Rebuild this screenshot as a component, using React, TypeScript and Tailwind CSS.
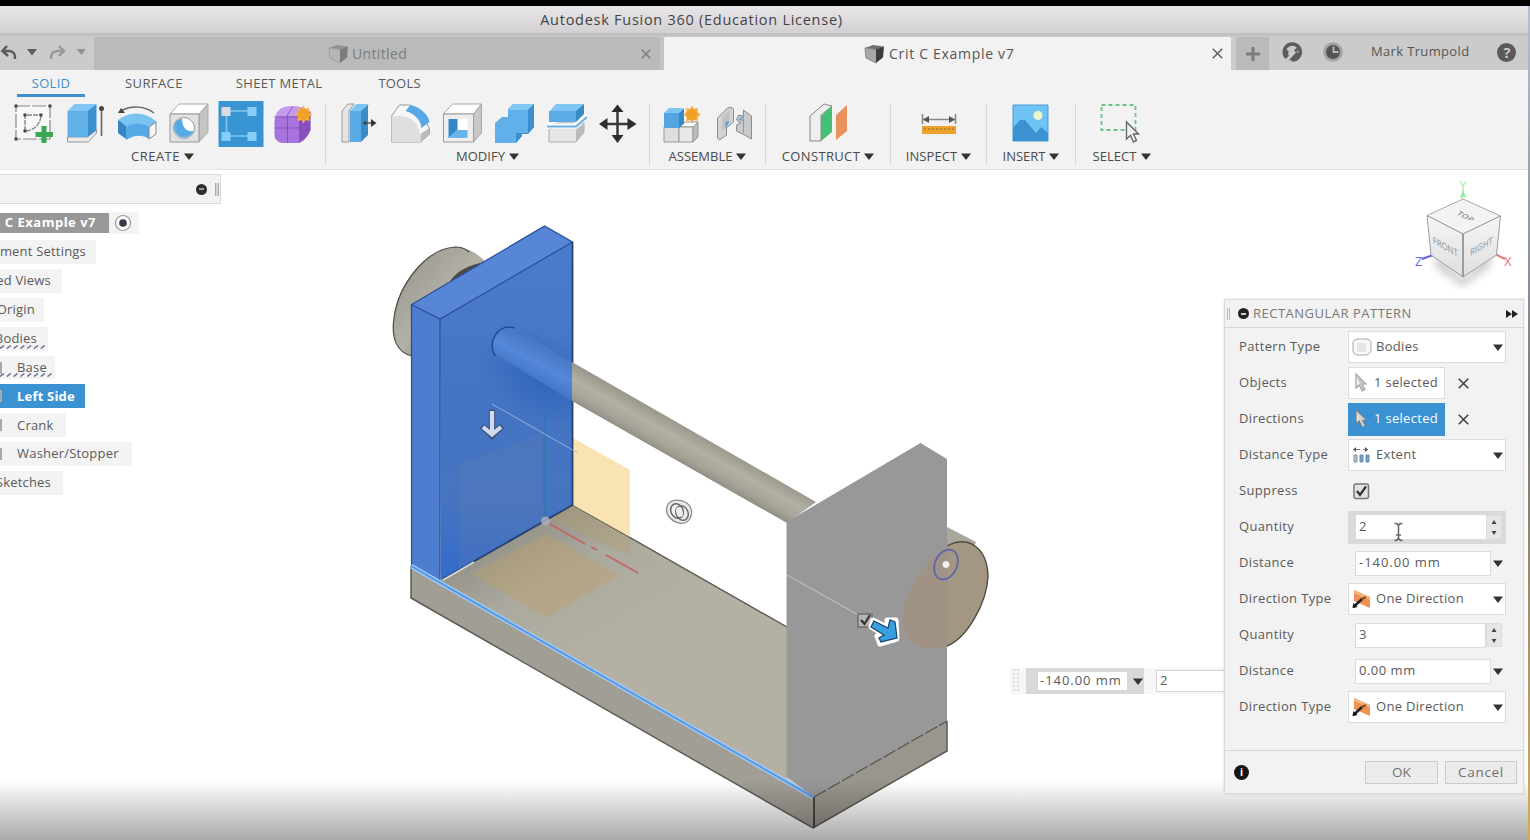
import type { ReactNode } from "react";

const Caret = ({ className = "" }: { className?: string }) => (
  <svg width="10" height="7" viewBox="0 0 10 7" className={className}>
    <path d="M0 0.5H10L5 7Z" fill="currentColor" />
  </svg>
);

const Cross = ({ size = 10, className = "" }: { size?: number; className?: string }) => (
  <svg width={size} height={size} viewBox="0 0 10 10" className={className}>
    <path d="M0.7 0.7L9.3 9.3M9.3 0.7L0.7 9.3" stroke="currentColor" strokeWidth="1.5" fill="none" />
  </svg>
);

const Cube = ({ faded = false }: { faded?: boolean }) => (
  <svg width="21" height="20" viewBox="0 0 21 20" opacity={faded ? 0.5 : 1}>
    <path d="M1 4L9 1L20 2.500L13 5.500Z" fill="#6f6f6f" />
    <path d="M1 4L13 5.500L12 19L2 14Z" fill={faded ? "#b4b4b4" : "#a9a9a9"} stroke="#777" strokeWidth="0.8" />
    <path d="M12 5.500L20 2.500L19 13.500L12 19Z" fill="#3d3d3d" />
  </svg>
);

const Tool = ({ x, children }: { x: number; children: ReactNode }) => (
  <svg width="46" height="46" viewBox={`${x - 23} 100 46 46`} className="shrink-0">
    {children}
  </svg>
);

const Star = ({ x, y }: { x: number; y: number }) => (
  <g transform={`translate(${x} ${y})`}>
    <path
      d="M0 -9L1.800 -5.800L6 -6.500L5.500 -2.200L9 0L5.500 2.200L6 6.500L2 5.500L0 9L-2 5.500L-6 6.500L-5.500 2.200L-9 0L-5.500 -2.200L-6 -6.500L-2 -5.500Z"
      fill="#f3b04c"
    />
    <circle r="5.800" fill="#f1a127" />
  </g>
);

const Group = ({ label, className, tracking, children }: { label: string; className: string; tracking: string; children: ReactNode }) => (
  <section className={`flex flex-col items-center ${className}`}>
    <div className="flex h-[46px] items-center justify-center gap-[6px]">{children}</div>
    <div className="mt-px flex h-[18px] items-center gap-[4px] whitespace-nowrap text-[13px] text-[#4a4a4a]">
      <span className={tracking}>{label}</span>
      <Caret className="-mt-px text-[#333]" />
    </div>
  </section>
);

const Divider = () => <div className="mt-[2px] h-[62px] w-px shrink-0 bg-[#d6d6d6]" />;

const TitleBar = () => (
  <header className="flex h-[27px] items-center justify-center bg-gradient-to-b from-[#e9e6e9] to-[#d2d0d2] pr-[147px] text-[14.5px] text-[#444]">
    <h1 className="whitespace-nowrap tracking-[0.73px]">Autodesk Fusion 360 (Education License)</h1>
  </header>
);

const DocumentTabs = () => (
  <nav className="flex h-[37px] items-end border-t-[3px] border-[#c2c0c2] bg-[#cbcbcb]">
    <div className="flex h-[34px] w-[94px] shrink-0 items-center text-[#626262]">
      <svg width="94" height="34" viewBox="0 36 94 34">
        <path d="M7 46L2.500 51L8 56M3 51H9C13.500 51 15.500 54 15 59" fill="none" stroke="#5c5c5c" strokeWidth="2.500" />
        <path d="M27 49H37L32 55.500Z" fill="#5a5a5a" />
        <path d="M59 46L64 51L59 56M63 51H57.500C53 51 50.500 54 51 59" fill="none" stroke="#999" strokeWidth="2.400" />
        <path d="M76.500 49H86L81.500 55Z" fill="#929292" />
      </svg>
    </div>
    <div className="flex h-[33px] w-[566px] shrink-0 items-center bg-[#bababa] pl-[234px] pr-[9px] text-[#7b7b7b]">
      <Cube faded />
      <span className="ml-[3px] text-[14px] tracking-[0.35px]">Untitled</span>
      <Cross className="ml-auto" />
    </div>
    <div className="h-[33px] w-[4px] shrink-0 bg-[#c3c3c3]" />
    <div className="flex h-[33px] w-[567px] shrink-0 items-center rounded-t-[2px] bg-[#f2f2f2] pl-[200px] pr-[8px] text-[#555]">
      <Cube />
      <span className="ml-[4px] whitespace-nowrap text-[14px] tracking-[0.7px]">Crit C Example v7</span>
      <Cross className="ml-auto text-[#666]" size={11} />
    </div>
    <div className="ml-[5px] flex h-[33px] w-[33px] shrink-0 items-center justify-center bg-[#bababa]">
      <svg width="16" height="16" viewBox="0 0 16 16">
        <path d="M8 1V15M1 8H15" stroke="#7c7c7c" strokeWidth="3" />
      </svg>
    </div>
    <div className="flex h-[36px] flex-1 items-center">
      <svg width="90" height="22" viewBox="1269 41 90 22">
        <path d="M1286.500 57.500A8 8 0 1 1 1292 60" fill="none" stroke="#5d5d5d" strokeWidth="3.600" />
        <path d="M1288 58Q1285 54 1287 50" fill="none" stroke="#5d5d5d" strokeWidth="4" />
        <path d="M1288 60Q1297 62 1301 54L1297 52L1290 56Z" fill="#5d5d5d" />
        <path d="M1286 61L1296 50.500" stroke="#cbcbcb" strokeWidth="3" />
        <path d="M1295 51.500L1299 47.500" stroke="#5d5d5d" strokeWidth="2.800" />
        <circle cx="1333" cy="52" r="9.800" fill="#a3a3a3" />
        <circle cx="1333" cy="52" r="7" fill="#555" />
        <path d="M1333.500 46.500V52H1338.500" stroke="#bbb" strokeWidth="1.800" fill="none" />
      </svg>
      <span className="ml-[12px] whitespace-nowrap text-[13px] tracking-[0.35px] text-[#555]">Mark Trumpold</span>
      <span className="ml-[28px] flex h-[19px] w-[19px] items-center justify-center rounded-full bg-[#5a5a5a] text-[15px] font-bold leading-none text-[#cbcbcb]">?</span>
    </div>
  </nav>
);

const Ribbon = () => (
  <section className="h-[100px] border-b border-[#e4e4e4] bg-[#f2f2f2]">
    <div className="flex h-[31px] pl-[17px] pt-[3px] text-[13px] text-[#5a5a5a]">
      <span className="flex h-[24px] w-[68px] items-start justify-center border-b-[3px] border-[#3c91cb] pt-[1px] tracking-[0.3px] text-[#3c91cb]">SOLID</span>
      <span className="ml-[40px] whitespace-nowrap pt-[1px] tracking-[0.4px]">SURFACE</span>
      <span className="ml-[53px] whitespace-nowrap pt-[1px] tracking-[0.35px]">SHEET METAL</span>
      <span className="ml-[56px] whitespace-nowrap pt-[1px] tracking-[0.2px]">TOOLS</span>
    </div>
    <div className="flex">
      <Group label="CREATE" className="w-[325px]" tracking="tracking-[0.5px]">
        <Tool x={34}>
          <path d="M17 105H51V138H17Z" fill="#f8f8f8" stroke="#888" strokeWidth="1.200" strokeDasharray="14 2" />
          <path d="M26 130V114H42M42 115C41 124 35 129 27 130" fill="none" stroke="#888" strokeWidth="1.400" strokeDasharray="5 1" />
          <path d="M15.500 103.500h3v3h-3zM49.500 103.500h3v3h-3zM15.500 136.500h3v3h-3zM24.500 112.500h3v3h-3zM40.500 112.500h3v3h-3zM24.500 128.500h3v3h-3z" fill="#444" />
          <path d="M45 125V142M36.500 133.500H54" stroke="#3aa852" strokeWidth="5" />
        </Tool>
        <Tool x={85.500}>
          <path d="M68 136H88L97 129V132L89 141H68Z" fill="#ececec" stroke="#999" strokeWidth="1" />
          <path d="M68 110L75 103H97L88 110Z" fill="#82c6f3" />
          <path d="M68 110H88V136H68Z" fill="#62b0ea" />
          <path d="M88 110L97 103V129L88 136Z" fill="#3b90cd" />
          <path d="M102 109V135" stroke="#666" strokeWidth="1.600" />
          <circle cx="102" cy="107.500" r="2.500" fill="#444" />
        </Tool>
        <Tool x={138}>
          <path d="M119 119C130 110 146 110 158 121L151 127C144 122 136 123 127 128Z" fill="#7bc4f1" />
          <path d="M119 119L127 125V138L119 132Z" fill="#3885c4" />
          <path d="M127 126C136 121 144 122 150 126V138C143 133 135 134 127 139Z" fill="#55a9e4" />
          <path d="M150 126L157 121V133L150 138Z" fill="#f5f5f5" stroke="#888" />
          <path d="M122 110C132 104 146 105 155 112" fill="none" stroke="#666" strokeWidth="1.500" />
          <path d="M119 112L122 107L126 112Z" fill="#444" />
        </Tool>
        <Tool x={190}>
          <path d="M171 113L180 103H209L200 113Z" fill="#fff" stroke="#aaa" />
          <path d="M200 113L209 103V131L200 141Z" fill="#c4c4c4" stroke="#aaa" />
          <path d="M171 113H200V141H171Z" fill="#e1e1e1" stroke="#999" />
          <circle cx="185" cy="127" r="10.500" fill="#fff" stroke="#999" />
          <path d="M178 119.500A10 10 0 1 0 194.500 130C188 131 183 127 183 117.500Z" fill="#58abe2" />
        </Tool>
        <Tool x={241.500}>
          <rect x="219" y="100" width="45" height="46" fill="#3994d4" />
          <path d="M227 110H252M227 110V135H252" fill="none" stroke="#81c7f4" strokeWidth="1.700" />
          <path d="M222 106h9v9h-9z" fill="#d9dde0" />
          <path d="M248 106h9v9h-9zM222 131h9v9h-9zM248 131h9v9h-9z" fill="#86cdf8" />
        </Tool>
        <Tool x={292.500}>
          <path d="M274 120Q275 109 284 106Q300 103 309 111L310 129Q306 139 299 142H281Q274 140 274 134Z" fill="#a873df" />
          <path d="M275 116Q277 108 285 106H300L298 115Z" fill="#c49af0" />
          <path d="M299 116L310 110V129Q306 138 299 141Z" fill="#8750bd" />
          <path d="M274 127H299L310 121M287 114V142M274 116H299V141M287 114L292 106" fill="none" stroke="#8350b5" strokeWidth="0.900" />
          <Star x={303} y={113.500} />
        </Tool>
      </Group>
      <Divider />
      <Group label="MODIFY" className="w-[323px]" tracking="tracking-[0.05px]">
        <Tool x={357}>
          <path d="M341 110L347 103H353L348 110V141H341Z" fill="#e5e5e5" stroke="#999" />
          <path d="M349 110L355 103H368L362 110Z" fill="#7cc5f3" />
          <path d="M349 110H360V141H349Z" fill="#5aabe5" />
          <path d="M360 110L367 104V134L360 141Z" fill="#3a8cc9" />
          <path d="M364 122H372" stroke="#555" strokeWidth="1.500" />
          <circle cx="364" cy="122" r="1.800" fill="#444" />
          <path d="M370 118L375.500 122L370 126Z" fill="#333" />
        </Tool>
        <Tool x={409.500}>
          <path d="M391 115L399 104H409L420 110L429 128V133L420 141H391Z" fill="#f6f6f6" stroke="#999" />
          <path d="M391 115H398C412 115 420 123 420 141H391Z" fill="#dedede" />
          <path d="M405 110L410 104C420 106 428 114 429 121L421 127C420 118 413 112 405 110Z" fill="#54a8e5" />
          <path d="M420 133L429 127V132L420 141Z" fill="#bbb" />
        </Tool>
        <Tool x={461.500}>
          <path d="M443 113L452 103H481L473 113Z" fill="#fff" stroke="#aaa" />
          <path d="M473 113L481 103V132L473 141Z" fill="#c8c8c8" stroke="#aaa" />
          <path d="M443 113H473V141H443Z" fill="#eee" stroke="#999" />
          <path d="M448 118H467V137H448Z" fill="#fff" />
          <path d="M448 118L457 118V129L448 137Z" fill="#3588c6" />
          <path d="M448 137L457 129H467V137Z" fill="#68b5ec" />
        </Tool>
        <Tool x={513}>
          <path d="M494 122L501 116H507V108L512 103H533V126L527 133H521V135L515 142H494Z" fill="#61b0ea" />
          <path d="M507 109L512 103H533L527 109Z" fill="#83c8f4" />
          <path d="M527 109L533 103V126L527 133H521V135L515 142V132H527Z" fill="#3b8fcd" />
        </Tool>
        <Tool x={565}>
          <path d="M548 129L556 122H583V131L575 141H548Z" fill="#e5e5e5" stroke="#aaa" />
          <path d="M575 129L583 122V132L575 141Z" fill="#bbb" />
          <path d="M546 125H574L586 115" fill="none" stroke="#fff" strokeWidth="5" />
          <path d="M546 125.500H575L586 116" fill="none" stroke="#68aee9" strokeWidth="2" />
          <path d="M548 111L555 103H583L575 111Z" fill="#80c6f2" />
          <path d="M548 110H575V121H548Z" fill="#5babe4" />
          <path d="M575 110L583 103V113L575 121Z" fill="#398bc6" />
        </Tool>
        <Tool x={617.500}>
          <path d="M617 108V138M602 123H632" stroke="#3a3a3a" strokeWidth="2.500" />
          <path d="M617 103.500L623 111H611ZM617 142L623 134H611ZM598.500 123L607 117V129ZM636 123L627 117V129Z" fill="#2d2d2d" />
        </Tool>
      </Group>
      <Divider />
      <Group label="ASSEMBLE" className="w-[115px]" tracking="tracking-[0px]">
        <Tool x={681}>
          <path d="M663 126H678V141H663Z" fill="#dedede" stroke="#999" />
          <path d="M679 126L684 121H697L692 126Z" fill="#fafafa" stroke="#999" />
          <path d="M678 126H692V141H678Z" fill="#e8e8e8" stroke="#999" />
          <path d="M692 126L697 121V136L692 141Z" fill="#bcbcbc" stroke="#999" />
          <path d="M663 112L668 107H682L678 112Z" fill="#7fc5f1" />
          <path d="M663 112H678V127H663Z" fill="#54a6e0" />
          <path d="M678 112L683 107V122L678 127Z" fill="#3789c6" />
          <Star x={691} y={113.500} />
        </Tool>
        <Tool x={733.500}>
          <path d="M717 117L727 107Q731 105 733 108V121L726 127V134L719 139L717 137Z" fill="#d2d3d5" stroke="#8a8a8a" />
          <path d="M722 116L729 109V122L722 130Z" fill="#bfc1c4" />
          <path d="M725 121L729 120L725 128Z" fill="#5f9fd4" />
          <path d="M743 109L751 115V138L744 134L736 130V124L740 122L736 119L738 114L743 115Z" fill="#c9cacb" stroke="#8a8a8a" />
          <path d="M743 114V132" stroke="#999" />
          <path d="M737 119L742 115V120Z" fill="#6fa9d9" />
        </Tool>
      </Group>
      <Divider />
      <Group label="CONSTRUCT" className="w-[124px]" tracking="tracking-[0.35px]">
        <Tool x={828}>
          <path d="M810 115L824 103L832 105L821 114V140H810Z" fill="#eee" stroke="#888" />
          <path d="M821 115L832 105V131L821 140Z" fill="#45bf76" />
          <path d="M836 114L847 104V130L836 139Z" fill="#e6935e" />
        </Tool>
      </Group>
      <Divider />
      <Group label="INSPECT" className="w-[95px]" tracking="tracking-[0.05px]">
        <Tool x={938}>
          <path d="M921.500 113V123M954.500 113V123M922 118.500H954" stroke="#888" strokeWidth="1.600" />
          <path d="M922 118.500L928 115V122ZM954 118.500L948 115V122Z" fill="#555" />
          <path d="M921 125H955V133H921Z" fill="#ecA22c" />
          <path d="M924 127V129M928 127V129M932 127V129M936 127V129M940 127V129M944 127V129M948 127V129M952 127V129" stroke="#9a6a22" />
        </Tool>
      </Group>
      <Divider />
      <Group label="INSERT" className="w-[88px]" tracking="tracking-[0px]">
        <Tool x={1031}>
          <path d="M1013 104H1048V140H1013Z" fill="#6fc4f5" stroke="#4b9bce" />
          <circle cx="1038" cy="114.500" r="4.500" fill="#edf6cf" />
          <path d="M1013 127L1020 119H1025L1036 132L1041 126L1048 132V140H1013Z" fill="#3a92d2" />
        </Tool>
      </Group>
      <Divider />
      <Group label="SELECT" className="w-[91px]" tracking="tracking-[0.05px]">
        <Tool x={1121.500}>
          <path d="M1101 104H1135V129H1101Z" fill="none" stroke="#6cc585" strokeWidth="1.800" strokeDasharray="4 3" />
          <path d="M1126 121V138L1130 134.500L1133 141L1136 139.500L1133 133H1138Z" fill="#f4f4f4" stroke="#666" strokeWidth="1.400" />
        </Tool>
      </Group>
    </div>
  </section>
);

const Scene = () => (
  <svg className="absolute inset-0" width="1530" height="670" viewBox="0 170 1530 670">
    <defs>
      <linearGradient id="wheel" x1="0" y1="0" x2="1" y2="1">
        <stop offset="0" stopColor="#93918a" />
        <stop offset="0.500" stopColor="#b3b0a5" />
        <stop offset="1" stopColor="#75736b" />
      </linearGradient>
      <linearGradient id="rod" gradientUnits="userSpaceOnUse" x1="700" y1="436" x2="682" y2="468">
        <stop offset="0" stopColor="#9b988c" />
        <stop offset="0.350" stopColor="#b3b0a5" />
        <stop offset="0.700" stopColor="#a5a297" />
        <stop offset="1" stopColor="#87847a" />
      </linearGradient>
      <linearGradient id="rodBlue" gradientUnits="userSpaceOnUse" x1="545" y1="345" x2="526" y2="380">
        <stop offset="0" stopColor="#4676c4" />
        <stop offset="0.500" stopColor="#5588d8" />
        <stop offset="1" stopColor="#3f71c1" />
      </linearGradient>
      <linearGradient id="floor" gradientUnits="userSpaceOnUse" x1="530" y1="510" x2="610" y2="650">
        <stop offset="0" stopColor="#918f86" />
        <stop offset="0.450" stopColor="#aca99f" />
        <stop offset="1" stopColor="#b4b0a4" />
      </linearGradient>
      <linearGradient id="plate" x1="0" y1="0" x2="0" y2="1">
        <stop offset="0" stopColor="#4a7ccb" />
        <stop offset="0.500" stopColor="#4374c3" />
        <stop offset="0.750" stopColor="#4675c0" />
        <stop offset="1" stopColor="#346bca" />
      </linearGradient>
      <radialGradient id="shade">
        <stop offset="0" stopColor="#2459b0" stopOpacity="0.600" />
        <stop offset="1" stopColor="#2459b0" stopOpacity="0" />
      </radialGradient>
      <linearGradient id="cubeShade" x1="0" y1="0" x2="0" y2="1">
        <stop offset="0" stopColor="#f6f6f6" />
        <stop offset="1" stopColor="#dedede" />
      </linearGradient>
      <clipPath id="plateFace"><path d="M440 319L572.500 242V505L441 580Z" /></clipPath>
      <filter id="soft"><feGaussianBlur stdDeviation="4" /></filter>
    </defs>

    <path d="M412 356C397 353 391 338 394 318C398 286 425 249 455 247C466 247 476 252 487 263L412 310Z" fill="url(#wheel)" />
    <path d="M412 356C397 353 391 338 394 318C398 286 425 249 455 247C461 247 466 249 469 252" fill="none" stroke="#4c4a45" strokeWidth="1.200" />
    <path d="M450 281C457 271 470 264 486 262L478 268Z" fill="#4c4b46" />

    <path d="M411 566L441 580L573 505L787 627V778L814 797Z" fill="url(#floor)" />
    <path d="M573 505L787 627" stroke="#555147" strokeWidth="1.300" />
    <path d="M573 438L630 470V537L573 505Z" fill="#fae3b3" />
    <path d="M573 506L630 538V556L548 518Z" fill="#b49e6d" opacity="0.350" />
    <path d="M545 534L619 575L546 618L472 574Z" fill="#bda368" opacity="0.420" />
    <path d="M411 566L814 797V828L411 598Z" fill="#a19e95" />
    <path d="M814 797L947 721V751L814 828Z" fill="#9a968e" />
    <path d="M411 566V598L813 828L947 751V721" fill="none" stroke="#5b5952" strokeWidth="1.500" />
    <path d="M814 797V828" stroke="#494742" strokeWidth="2" />

    <path d="M411.500 304.500L440 319V580L411.500 565Z" fill="#4c7dce" />
    <path d="M411.500 304.500L544.500 226L572.500 242L440 319Z" fill="#5686d5" />
    <path d="M440 319L572.500 242V505L441 580Z" fill="url(#plate)" />
    <g clipPath="url(#plateFace)">
      <ellipse cx="543" cy="378" rx="72" ry="42" transform="rotate(28 543 378)" fill="url(#shade)" />
    </g>
    <path d="M459 465L545 432V522L459 570Z" fill="#647eab" opacity="0.220" />
    <path d="M411.500 566V304.500L544.500 226L572.500 242L440 319L411.500 304.500" fill="none" stroke="#274d95" strokeWidth="1.200" />
    <path d="M440 319V580" stroke="#2d57a8" strokeWidth="1.500" />
    <path d="M572.500 242V505L443 579" fill="none" stroke="#27406f" strokeWidth="1.800" />
    <path d="M510 326L572 362V401L496 355C488 341 500 325 510 326Z" fill="url(#rodBlue)" />
    <path d="M495 356C486 342 499 322 515 328" fill="none" stroke="#234b94" strokeWidth="1.500" />
    <path d="M572 362L816 502L787 523L572 401Z" fill="url(#rod)" />
    <path d="M544.500 412V516" stroke="#267ba8" strokeWidth="2.500" opacity="0.550" />
    <path d="M492 404L578 453" stroke="#a9bee2" strokeWidth="1" opacity="0.800" />
    <path d="M492 409.500V434M482 426L492 435.500L502 426" fill="none" stroke="#3d5680" strokeWidth="6.500" />
    <path d="M492 411V433M483 427L492 434.500L501 427" fill="none" stroke="#d0daec" strokeWidth="4.200" />
    <circle cx="545.500" cy="521" r="4.500" fill="#a9aeb3" opacity="0.850" />
    <path d="M550 524L585 544M591 547L597 550M606 555L638 573" stroke="#c1655f" strokeWidth="1.600" />
    <path d="M443 580L474 562" stroke="#dedad5" strokeWidth="1.500" />
    <path d="M411 566L813 797" stroke="#a9cff7" strokeWidth="4.500" />
    <path d="M411 566L813 797" stroke="#569ce8" strokeWidth="2.200" />

    <path d="M947 527L976 542L965 570L947 560Z" fill="#aaa79c" />
    <path d="M947 546C968 535 987 547 988 576C987 603 967 638 947 646Z" fill="#a39783" />
    <path d="M947 546C968 535 987 547 988 576C987 603 967 638 947 646" fill="none" stroke="#4f4b42" strokeWidth="1.400" />
    <path d="M786.500 522L920.500 443L947 459V721L814 797L786.500 777Z" fill="#989898" />
    <path d="M814 797L947 721" stroke="#5d5b55" strokeWidth="1.400" strokeDasharray="14 2" />
    <path d="M947 547C925 562 901 593 903 622C904 644 918 653 947 647Z" fill="#a09285" />
    <ellipse cx="946" cy="564.500" rx="11" ry="15.500" transform="rotate(24 946 564.500)" fill="none" stroke="#5963b1" strokeWidth="1.700" />
    <circle cx="946" cy="564.500" r="4" fill="#f3f1e9" stroke="#888" strokeWidth="0.800" />
    <path d="M787 575L862 617" stroke="#bdbdbd" strokeWidth="1.300" />
    <rect x="858" y="614" width="14" height="13" fill="#b5b5b5" stroke="#666" strokeWidth="1.300" />
    <path d="M861 620L864.500 624L870 615" fill="none" stroke="#333" strokeWidth="2.200" />
    <path d="M873 620L887 627V620L896 620L897 639L880 644L877 636L882 634L871 627Z" fill="#fff" stroke="#fff" strokeWidth="5" strokeLinejoin="round" />
    <path d="M874 621L888 628L890 620L895 622L897 638L881 642L879 638L884 635L871 627Z" fill="#39a0df" stroke="#1d4d73" strokeWidth="1.300" />

    <path d="M667 507C668 499 679 499 685 502C693 506 693 515 689 520C684 526 675 523 670 518C667 515 666 511 667 507Z" fill="#e8e8e8" stroke="#888" strokeWidth="1.200" />
    <ellipse cx="677" cy="511" rx="6" ry="7.500" transform="rotate(-25 677 511)" fill="#f2f2f2" stroke="#666" strokeWidth="1.500" />
    <ellipse cx="682" cy="513" rx="6" ry="7.500" transform="rotate(-25 682 513)" fill="none" stroke="#666" strokeWidth="1.400" />
    <ellipse cx="679.500" cy="512" rx="3" ry="5" transform="rotate(-25 679.500 512)" fill="#eee" />

    <path d="M1436 255L1463 280L1490 255V265L1463 286L1436 266Z" fill="#555" opacity="0.400" filter="url(#soft)" />
    <path d="M1463 189V198M1460.500 198L1463 192L1465.500 198" stroke="#8aeb9a" strokeWidth="1.300" fill="none" />
    <text x="1459.500" y="190" fontSize="12" fill="#91ec9f" fontFamily="Open Sans">Y</text>
    <path d="M1422 259L1433 255" stroke="#615fe2" strokeWidth="2" />
    <text x="1415" y="266" fontSize="13" fill="#6664df" fontFamily="Open Sans">Z</text>
    <path d="M1495 254L1505 259" stroke="#e57b80" strokeWidth="2" />
    <text x="1504" y="266" fontSize="13" fill="#e5757b" fontFamily="Open Sans">X</text>
    <path d="M1463 199L1500.500 216L1463 234L1427 215.500Z" fill="#f3f3f3" stroke="#a9a9a9" />
    <path d="M1427 215.500L1463 234V277L1431 255Z" fill="url(#cubeShade)" stroke="#9c9c9c" />
    <path d="M1500.500 216L1463 234V277L1496.500 255Z" fill="url(#cubeShade)" stroke="#9c9c9c" />
    <path d="M1463 234V277" stroke="#999" strokeWidth="1.800" />
    <text transform="matrix(0.860 0.460 -0.600 0.500 1456 214)" fontSize="9" fill="#8d8d8d" fontFamily="Open Sans" fontWeight="600">TOP</text>
    <text transform="matrix(0.820 0.460 0.080 1 1433 243)" fontSize="9.500" fill="#8f8f8f" fontFamily="Open Sans">FRONT</text>
    <text transform="matrix(0.820 -0.460 -0.060 1 1470 256)" fontSize="9.500" fill="#8f8f8f" fontFamily="Open Sans">RIGHT</text>
  </svg>
);

const nodes = [
  { label: "ment Settings", box: "w-[96px] pr-[10px] justify-end bg-[#f3f3f3]" },
  { label: "ed Views", box: "w-[62px] pr-[11px] justify-end bg-[#f3f3f3]" },
  { label: "Origin", box: "w-[44px] pr-[9px] justify-end bg-[#f3f3f3]" },
  { label: "Bodies", box: "w-[48px] pr-[11px] justify-end bg-[#f3f3f3]", hatch: 48 },
  { label: "Base", box: "w-[55px] pl-[17px] bg-[#f3f3f3]", hatch: 55, tick: true },
  { label: "Left Side", box: "w-[85px] pl-[17px] bg-[#3b92d3] font-bold text-white", tick: true },
  { label: "Crank", box: "w-[66px] pl-[17px] bg-[#f3f3f3]", tick: true },
  { label: "Washer/Stopper", box: "w-[132px] pl-[17px] bg-[#f3f3f3]", tick: true },
  { label: "Sketches", box: "w-[63px] pr-[12px] justify-end bg-[#f3f3f3]" },
];

const Browser = () => (
  <aside className="relative w-[240px] pt-[4px] text-[13px] text-[#5a5a5a]">
    <div className="flex h-[30px] w-[221px] items-center justify-end border border-l-0 border-[#dadada] bg-[#f2f2f2]">
      <span className="flex h-[11px] w-[11px] items-center justify-center rounded-full bg-[#2d2d2d]">
        <span className="h-[2px] w-[5px] bg-[#999]" />
      </span>
      <span className="ml-[8px] mr-px h-[13px] w-[4px] border-x border-[#aaa] bg-[#d5d5d5]" />
    </div>
    <div className="mt-[8px] flex h-[22px] items-center">
      <span className="flex h-[20px] w-[109px] items-center justify-end overflow-hidden whitespace-nowrap bg-[#989898] pr-[13px] font-bold tracking-[0.5px] text-white">C Example v7</span>
      <span className="flex h-[22px] w-[30px] items-center justify-center bg-[#f3f3f3]">
        <svg width="18" height="18" viewBox="0 0 18 18">
          <circle cx="8" cy="9" r="7.500" fill="#fafafa" stroke="#9a9a9a" strokeWidth="1.200" />
          <circle cx="8" cy="9" r="3.800" fill="#363945" />
        </svg>
      </span>
    </div>
    <ul className="mt-[6px] flex flex-col gap-[5px]">
      {nodes.map((n) => (
        <li key={n.label} className={`relative flex h-[23.9px] items-center overflow-hidden whitespace-nowrap tracking-[0.2px] ${n.box}`}>
          {n.tick && <span className="absolute left-0 top-[6px] h-[12px] w-[2px] bg-[#aaa]" />}
          <span className="shrink-0">{n.label}</span>
          {n.hatch && (
            <svg className="absolute bottom-[2px] left-0" width={n.hatch} height="4" viewBox={`0 0 ${n.hatch} 4`}>
              {Array.from({ length: Math.floor(n.hatch / 6.8) }, (_, i) => (
                <path key={i} d={`M${i * 6.8} 3.500L${i * 6.8 + 4} 0.500`} stroke="#686e8c" strokeWidth="1.500" />
              ))}
            </svg>
          )}
        </li>
      ))}
    </ul>
  </aside>
);

const Pointer = ({ active = false }: { active?: boolean }) => (
  <svg width="14" height="20" viewBox="0 0 14 20">
    <path d="M2 1V15L5.200 12L8.200 18L11 16.500L8 11H12Z" fill={active ? "#e2e2e2" : "#f1f1f1"} stroke={active ? "#777" : "#999"} strokeWidth="1.100" />
    <path d="M2 1L12 11L8 11L11 16.500L8.500 18Z" fill={active ? "#ccc" : "#b5b5b5"} opacity="0.700" />
  </svg>
);

const Row = ({ label, children }: { label: string; children: ReactNode }) => (
  <div className="flex h-[36px] items-center">
    <label className="w-[109px] shrink-0 whitespace-nowrap tracking-[0.35px]">{label}</label>
    {children}
  </div>
);

const Choice = ({ icon, value }: { icon: ReactNode; value: string }) => (
  <div className="flex h-[32px] w-[158px] items-center border border-[#dcdcdc] bg-white pl-[3px] pr-[2px]">
    <span className="flex w-[20px] justify-center">{icon}</span>
    <span className="ml-[4px] whitespace-nowrap tracking-[0.3px]">{value}</span>
    <Caret className="ml-auto text-[#333]" />
  </div>
);

const Picked = ({ active = false }: { active?: boolean }) => (
  <>
    <div className={active ? "flex h-[33px] w-[97px] items-center bg-[#3a92d3] pl-[6px] text-white" : "flex h-[32px] w-[97px] items-center border border-[#dedede] bg-white pl-[5px]"}>
      <Pointer active={active} />
      <span className="ml-[6px] whitespace-nowrap tracking-[0.3px]">1 selected</span>
    </div>
    <Cross className="ml-[13px] text-[#444]" size={11} />
  </>
);

const Spinner = () => (
  <span className="flex h-[24px] w-[16px] flex-col items-center justify-around border border-[#ddd] bg-[#e6e6e6]">
    <svg width="6" height="4" viewBox="0 0 6 4"><path d="M0.500 4L3 0L5.500 4Z" fill="#444" /></svg>
    <svg width="6" height="4" viewBox="0 0 6 4"><path d="M0.500 0L3 4L5.500 0Z" fill="#444" /></svg>
  </span>
);

const Length = ({ value, tracking }: { value: string; tracking: string }) => (
  <>
    <div className={`ml-[7px] flex h-[25px] w-[136px] items-center whitespace-nowrap border border-[#dcdcdc] bg-white pl-[3px] ${tracking}`}>{value}</div>
    <Caret className="ml-[2px] text-[#333]" />
  </>
);

const DirectionIcon = () => (
  <svg width="20" height="20" viewBox="0 0 20 20">
    <path d="M2 1L18 8V19L2 12Z" fill="#ee9253" />
    <path d="M2 1L18 8V11L2 4Z" fill="#f7b27e" />
    <path d="M1.500 18L10 10" stroke="#222" strokeWidth="2.600" />
    <path d="M0.500 19L1.500 14L5.500 18Z" fill="#111" />
    <path d="M10 10L14 8" stroke="#8d4a1c" strokeWidth="2" />
  </svg>
);

const PatternPanel = () => (
  <section className="absolute left-[1224px] top-[129px] flex h-[495px] w-[300px] flex-col border border-[#d9d9d9] bg-[#f2f2f2] text-[13px] text-[#5a5a5a] shadow-[0_0_3px_rgba(0,0,0,0.12)]">
    <header className="flex h-[28px] shrink-0 items-center border-b border-[#d5d5d5] pl-[2px] pr-[5px] text-[#777]">
      <span className="h-[12px] w-[3px] border-x border-[#bbb]" />
      <span className="ml-[8px] flex h-[11px] w-[11px] items-center justify-center rounded-full bg-[#222]">
        <span className="h-[2px] w-[5px] bg-[#ccc]" />
      </span>
      <h2 className="ml-[4px] whitespace-nowrap tracking-[0.5px]">RECTANGULAR PATTERN</h2>
      <svg className="ml-auto" width="12" height="8" viewBox="0 0 12 8"><path d="M0 0L6 4L0 8ZM6 0L12 4L6 8Z" fill="#222" /></svg>
    </header>
    <div className="flex flex-1 flex-col pl-[14px] pt-[1px]">
      <Row label="Pattern Type">
        <Choice
          value="Bodies"
          icon={
            <svg width="20" height="18" viewBox="0 0 20 18">
              <path d="M1 4Q2 1 6 1H15Q19 2 19 4V13Q17 17 14 17H5Q1 16 1 13Z" fill="#f8f8f8" stroke="#aaa" />
              <path d="M5 5H14V14H5Z" fill="#e6e6e6" />
            </svg>
          }
        />
      </Row>
      <Row label="Objects"><Picked /></Row>
      <Row label="Directions"><Picked active /></Row>
      <Row label="Distance Type">
        <Choice
          value="Extent"
          icon={
            <svg width="18" height="16" viewBox="0 0 18 16">
              <path d="M1 2.500H15" stroke="#777" strokeDasharray="6 3" />
              <path d="M0 2.500L3 0V5ZM15 2.500L12 0V5Z" fill="#555" />
              <path d="M1 8H4V15H1Z" fill="#adc4d8" stroke="#7d92a5" />
              <path d="M7 8H10V15H7ZM13 8H16V15H13Z" fill="#769fc9" stroke="#6b8bb0" />
            </svg>
          }
        />
      </Row>
      <Row label="Suppress">
        <svg className="ml-[5px]" width="17" height="17" viewBox="0 0 17 17">
          <rect x="1" y="1" width="14.500" height="14.500" rx="2" fill="#e2e2e2" stroke="#777" strokeWidth="1.500" />
          <path d="M4 8L7 12L13 3.500" fill="none" stroke="#333" strokeWidth="2.200" />
        </svg>
      </Row>
      <Row label="Quantity">
        <div className="relative flex h-[33px] w-[158px] items-center bg-[#d9dadb] pl-[8px]">
          <span className="flex h-[24px] w-[130px] items-center bg-white pl-[3px]">2</span>
          <Spinner />
          <svg className="absolute left-[45px] top-[11px]" width="11" height="20" viewBox="0 0 11 20">
            <path d="M1.500 1.500Q5 1 5.500 4Q6 1 9.500 1.500M5.500 3V17M1.500 18.500Q5 18.500 5.500 16Q6 18.500 9.500 18.500M3 13H8" fill="none" stroke="#666" strokeWidth="1.500" />
          </svg>
        </div>
      </Row>
      <Row label="Distance"><Length value="-140.00 mm" tracking="tracking-[0.95px]" /></Row>
      <Row label="Direction Type"><Choice value="One Direction" icon={<DirectionIcon />} /></Row>
      <Row label="Quantity">
        <span className="ml-[7px] flex h-[25px] w-[131px] items-center border border-[#dcdcdc] bg-white pl-[3px]">3</span>
        <Spinner />
      </Row>
      <Row label="Distance"><Length value="0.00 mm" tracking="tracking-[0.5px]" /></Row>
      <Row label="Direction Type"><Choice value="One Direction" icon={<DirectionIcon />} /></Row>
    </div>
    <footer className="flex h-[43px] shrink-0 items-center border-t border-[#d5d5d5] pl-[9px] pr-[6px]">
      <span className="flex h-[15px] w-[15px] items-center justify-center rounded-full bg-[#151515] text-[10px] font-bold text-white">i</span>
      <button className="ml-auto flex h-[23px] w-[73px] items-center justify-center border border-[#cbcbcb] bg-[#ebebeb] text-[13.5px] text-[#707070]">OK</button>
      <button className="ml-[7px] flex h-[23px] w-[72px] items-center justify-center border border-[#cbcbcb] bg-[#ebebeb] text-[13.5px] tracking-[0.7px] text-[#707070]">Cancel</button>
    </footer>
  </section>
);

const InlineInput = () => (
  <div className="absolute left-[1010px] top-[498px] flex h-[26px] w-[214px] items-center bg-[#f6f6f6] text-[13px] text-[#5a5a5a]">
    <svg width="16" height="26" viewBox="0 0 16 26">
      <path d="M4 1V25M8 1V25" stroke="#dcdcdc" strokeWidth="2" strokeDasharray="2 2" />
    </svg>
    <div className="flex h-[26px] w-[118px] items-center bg-[#d8d8d8] pl-[12px]">
      <span className="flex h-[18px] w-[89px] items-center whitespace-nowrap bg-white pl-[2px] tracking-[0.95px]">-140.00 mm</span>
      <Caret className="ml-[6px] text-[#333]" />
    </div>
    <div className="ml-[12px] flex h-[22px] w-[68px] items-center border border-r-0 border-[#d5d5d5] bg-white pl-[3px]">2</div>
  </div>
);

export default function App() {
  return (
    <div className="relative flex h-[840px] w-[1530px] flex-col overflow-hidden bg-white font-['Open_Sans','Noto_Sans',sans-serif]">
      <div className="h-[6px] bg-black" />
      <TitleBar />
      <DocumentTabs />
      <Ribbon />
      <main className="relative h-[670px] overflow-hidden">
        <Scene />
        <Browser />
        <InlineInput />
        <div className="absolute inset-x-0 bottom-0 h-[60px] bg-gradient-to-b from-transparent to-[#00000055]" />
        <PatternPanel />
      </main>
      <div className="absolute right-0 top-[6px] h-[834px] w-[2px] bg-gradient-to-b from-[#b6bfd0] via-[#777] to-[#d4ad4e]" />
    </div>
  );
}
